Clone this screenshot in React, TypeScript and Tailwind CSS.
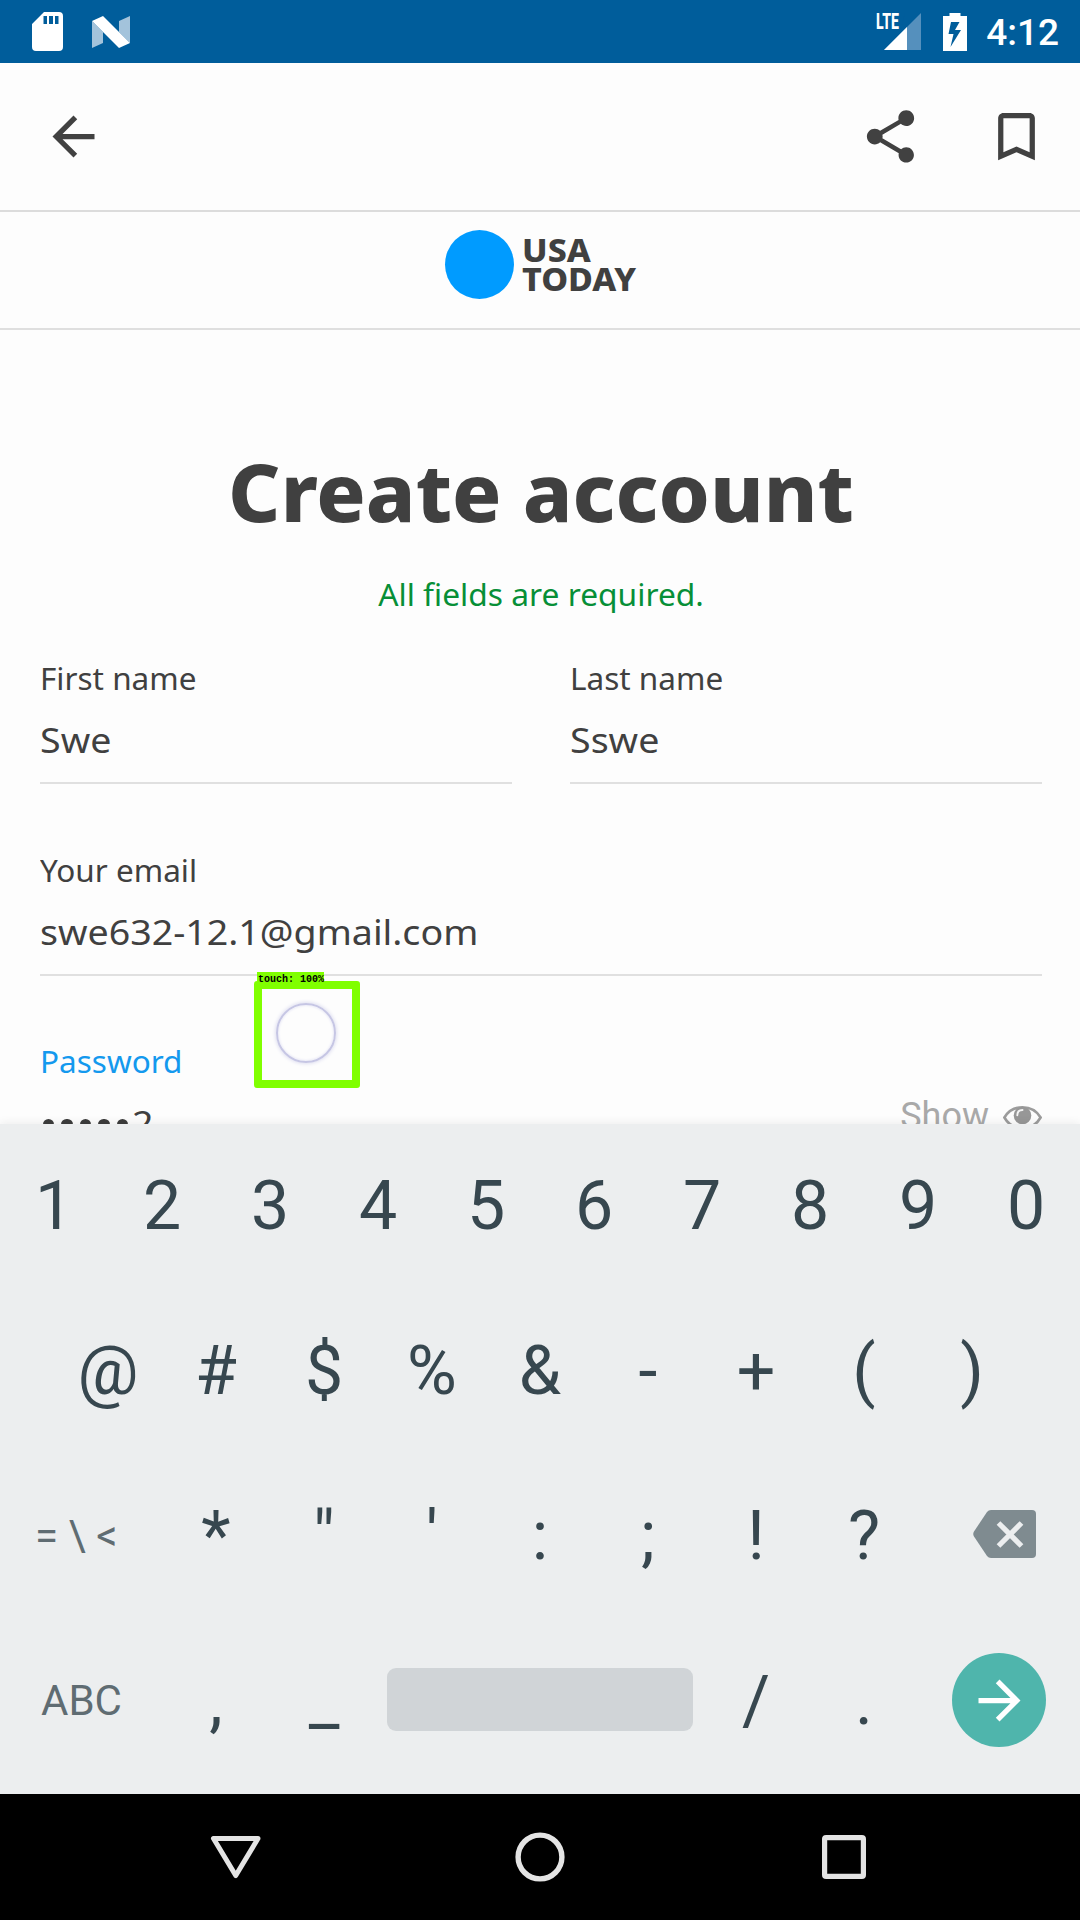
import type { ReactNode } from "react";

const NOTO = "font-['Noto_Sans',sans-serif]";

function Glyph({ d, className }: { d: string; className: string }) {
  return (
    <svg viewBox="0 0 24 24" className={className} fill="currentColor">
      <path d={d} />
    </svg>
  );
}

function StatusBar() {
  return (
    <div className="flex h-[63px] shrink-0 items-center justify-between bg-[#005d9b] pl-8 pr-[21px] text-white">
      <div className="flex items-center">
        <svg viewBox="0 0 31 39" className="h-[39px] w-[31px]">
          <path
            fill="#fff"
            fillRule="evenodd"
            d="M12 0H27Q31 0 31 4V35Q31 39 27 39H4Q0 39 0 35V12ZM11.500 4V12H15V4ZM17 4V12H21V4ZM23 4V12H26.500V4Z"
          />
        </svg>
        <svg viewBox="0 0 38 32" className="ml-[29px] h-8 w-[38px]">
          <path fill="#a3c3db" d="M0 5L11 16V27L0 32ZM38 0V27L27 16V5Z" />
          <path fill="#fff" d="M0 5L11 0L38 27L27 32Z" />
        </svg>
      </div>
      <div className="flex items-center">
        <div className="relative h-[37px] w-[45px]">
          <svg viewBox="0 0 45 37" className="h-[37px] w-[45px]">
            <path fill="#5590bd" d="M45 0V37H8Z" />
            <path fill="#005d9b" d="M0 0H29L24 19H0Z" />
            <path fill="#fff" d="M31 14V37H8Z" />
          </svg>
          <span className="absolute left-0 top-0 origin-left scale-x-[0.64] font-[Roboto,sans-serif] text-[22px] font-extrabold leading-[17px]">
            LTE
          </span>
        </div>
        <svg viewBox="0 0 24 38" className="ml-[22px] h-[38px] w-6">
          <path
            fill="#fff"
            fillRule="evenodd"
            d="M6.500 0H17.500V3H24V38H0V3H6.500ZM8 9L5.500 21H10.500L7.500 34L18 17H12L16.500 9Z"
          />
        </svg>
        <span className="ml-[19px] mt-[3px] font-[Roboto,sans-serif] text-[37px] font-medium leading-[40px]">4:12</span>
      </div>
    </div>
  );
}

function Field({ label, active, children }: { label: string; active?: boolean; children: ReactNode }) {
  return (
    <div className="min-w-0 flex-1">
      <div
        className={
          active
            ? "h-10 origin-left scale-x-[1.05] text-[30px] leading-[40px] text-[#1499ee]"
            : "h-10 origin-left scale-x-[1.05] text-[30px] leading-[40px]"
        }
      >
        {label}
      </div>
      <div className="mt-[21px] h-16 border-b-2 border-[#e0e0e0] text-[34px] leading-[40px]">{children}</div>
    </div>
  );
}

function Value({ children }: { children: ReactNode }) {
  return <span className="inline-block origin-left scale-x-[1.105]">{children}</span>;
}

function Eye() {
  return (
    <svg viewBox="0 0 39 26" className="ml-[14px] mt-[2px] h-[26px] w-[39px]" fill="none">
      <path d="M1.400 12.500C9.500-1.200 29.500-1.200 37.600 12.500C29.500 27 9.500 27 1.400 12.500Z" stroke="#9c9c9c" strokeWidth="2.600" />
      <circle cx="19.500" cy="10.500" r="8.800" fill="#979797" />
      <path d="M14.300 10.300C14.300 7 16.300 5 19.500 5" stroke="#f4f4f4" strokeWidth="1.900" strokeLinecap="round" />
    </svg>
  );
}

function Key({ children }: { children: ReactNode }) {
  return <div className="flex w-[108px] items-center justify-center">{children}</div>;
}

function KeyRow({ children }: { children: ReactNode }) {
  return <div className="flex h-[165px] justify-center text-[68px] leading-[80px]">{children}</div>;
}

export default function App() {
  return (
    <div className="flex h-[1920px] w-[1080px] flex-col overflow-hidden bg-[#fdfdfd]">
      <StatusBar />

      <header className="flex h-[149px] shrink-0 items-center border-b-2 border-[#dcdcdc] pl-[42px] pr-8 text-[#414141]">
        <Glyph className="size-[63px]" d="M20 11H7.830l5.590-5.590L12 4l-8 8 8 8 1.410-1.410L7.830 13H20v-2z" />
        <Glyph
          className="ml-auto size-[63px]"
          d="M18 16.080c-.76 0-1.440.3-1.960.77L8.910 12.700c.05-.23.09-.46.09-.7s-.04-.47-.09-.7l7.050-4.110c.54.5 1.250.81 2.040.81 1.660 0 3-1.340 3-3s-1.340-3-3-3-3 1.340-3 3c0 .24.04.47.09.7L8.040 9.810C7.500 9.310 6.790 9 6 9c-1.660 0-3 1.340-3 3s1.340 3 3 3c.79 0 1.500-.31 2.040-.81l7.120 4.160c-.05.21-.08.43-.08.65 0 1.610 1.310 2.920 2.920 2.920 1.610 0 2.920-1.310 2.920-2.920s-1.310-2.920-2.920-2.920z"
        />
        <Glyph
          className="ml-[63px] size-[63px]"
          d="M17 3H7c-1.100 0-1.990.9-1.990 2L5 21l7-3 7 3V5c0-1.100-.9-2-2-2zm0 15l-5-2.180L7 18V5h10v13z"
        />
      </header>

      <div className="flex h-[118px] shrink-0 items-start justify-center border-b-2 border-[#dfdfdf] pt-[18px]">
        <div className="size-[69px] rounded-full bg-[#009bff]" />
        <div
          className={`${NOTO} ml-2 mt-[5px] w-[114px] origin-left scale-x-[1.06] text-[32px] font-extrabold leading-[29px] text-[#404040]`}
        >
          USA
          <br />
          TODAY
        </div>
      </div>

      <main className={`${NOTO} relative h-[794px] shrink-0 pl-10 pr-[38px] pt-[121px] text-[#404040]`}>
        <h1 className="scale-x-[1.02] whitespace-nowrap text-center text-[80px] font-extrabold leading-[80px]">
          Create account
        </h1>
        <p className="mt-[44px] scale-x-[1.058] text-center text-[30px] leading-[40px] text-[#078f37]">
          All fields are required.
        </p>
        <div className="mt-[44px] flex gap-[58px]">
          <Field label="First name">
            <Value>Swe</Value>
          </Field>
          <Field label="Last name">
            <Value>Sswe</Value>
          </Field>
        </div>
        <div className="mt-[67px] flex">
          <Field label="Your email">
            <Value>swe632-12.1@gmail.com</Value>
          </Field>
        </div>
        <div className="mt-[66px] flex">
          <Field label="Password" active>
            <div className="flex h-10">
              <div className="flex items-center gap-[7px] pl-[3px] pt-[3px]">
                {[0, 1, 2, 3, 4].map((i) => (
                  <span key={i} className="size-[11.400px] rounded-full bg-[#3c3c3c]" />
                ))}
              </div>
              <span className="ml-[4px]">
                <Value>2</Value>
              </span>
              <span className="-mt-[7px] ml-auto font-[Roboto,sans-serif] text-[36px] leading-[40px] text-[#a9a9a9]">
                Show
              </span>
              <Eye />
            </div>
          </Field>
        </div>

        <div className="absolute left-[254px] top-[651px] flex h-[107px] w-[106px] items-center justify-center rounded-[3px] border-8 border-[#80ff00]">
          <div className="mb-[3px] mr-[3px] size-[60px] rounded-full border-2 border-[#c6c6e4] shadow-[0_0_4px_#cfcfea,inset_0_0_3px_#dcdcf2]" />
        </div>
        <div className="absolute left-[257px] top-[642px] h-[12px] w-[67px] whitespace-pre bg-[#80ff00] pl-px font-['Liberation_Mono',monospace] text-[10px] font-bold leading-[15px] text-black">
          touch: 100%
        </div>
      </main>

      <section className="relative z-10 h-[670px] shrink-0 bg-[#eceeef] font-[Roboto,sans-serif] text-[#37474f] shadow-[0_-2px_8px_rgba(0,0,0,0.06)]">
        <div className="-mt-px">
          <KeyRow>
            {["1", "2", "3", "4", "5", "6", "7", "8", "9", "0"].map((k) => (
              <Key key={k}>{k}</Key>
            ))}
          </KeyRow>
          <KeyRow>
            {["@", "#", "$", "%", "&", "-", "+", "(", ")"].map((k) => (
              <Key key={k}>{k}</Key>
            ))}
          </KeyRow>
          <KeyRow>
            <div className="flex w-[162px] items-center whitespace-nowrap pl-[35px] text-[42px] text-[#5f6c72]">
              {"= \\ <"}
            </div>
            {["*", '"', "'", ":", ";", "!", "?"].map((k) => (
              <Key key={k}>{k}</Key>
            ))}
            <div className="flex w-[162px] items-center pb-[3px] pl-[55px]">
              <svg viewBox="0 0 63 48" className="h-12 w-[63px]">
                <path fill="#7f8b90" d="M18 0H59Q63 0 63 4V44Q63 48 59 48H18Q15.500 48 14 46L1 26.500Q-.5 24 1 21.500L14 2Q15.500 0 18 0Z" />
                <path stroke="#eceeef" strokeWidth="5.200" d="M25.500 13L48.500 36M48.500 13L25.500 36" />
              </svg>
            </div>
          </KeyRow>
          <KeyRow>
            <div className="flex w-[162px] items-center pl-[41px] text-[42px] text-[#5f6c72]">ABC</div>
            <Key>,</Key>
            <Key>_</Key>
            <div className="flex w-[324px] items-center justify-center pb-[2px]">
              <div className="h-[63px] w-[306px] rounded-[9px] bg-[#d0d4d7]" />
            </div>
            <Key>/</Key>
            <Key>.</Key>
            <div className="flex w-[162px] items-center pb-px pl-[34px]">
              <div className="flex size-[94px] items-center justify-center rounded-full bg-[#4fb5ac] text-white">
                <Glyph className="size-[63px]" d="M12 4l-1.410 1.410L16.170 11H4v2h12.170l-5.580 5.590L12 20l8-8z" />
              </div>
            </div>
          </KeyRow>
        </div>
      </section>

      <nav className="relative z-10 flex h-[126px] shrink-0 items-center justify-between bg-black px-[207px] text-[#e4e4e4]">
        <svg viewBox="0 0 58 58" className="size-[58px]" fill="none" stroke="currentColor" strokeWidth="5" strokeLinejoin="round">
          <path d="M6.500 10.500H51L28.750 47.500Z" />
        </svg>
        <svg viewBox="0 0 58 58" className="size-[58px]" fill="none" stroke="currentColor" strokeWidth="5.400">
          <circle cx="29" cy="29" r="21.900" />
        </svg>
        <svg viewBox="0 0 58 58" className="size-[58px]" fill="none" stroke="currentColor" strokeWidth="5.200">
          <rect x="9.600" y="9.600" width="38.800" height="38.800" rx="1.500" />
        </svg>
      </nav>
    </div>
  );
}
